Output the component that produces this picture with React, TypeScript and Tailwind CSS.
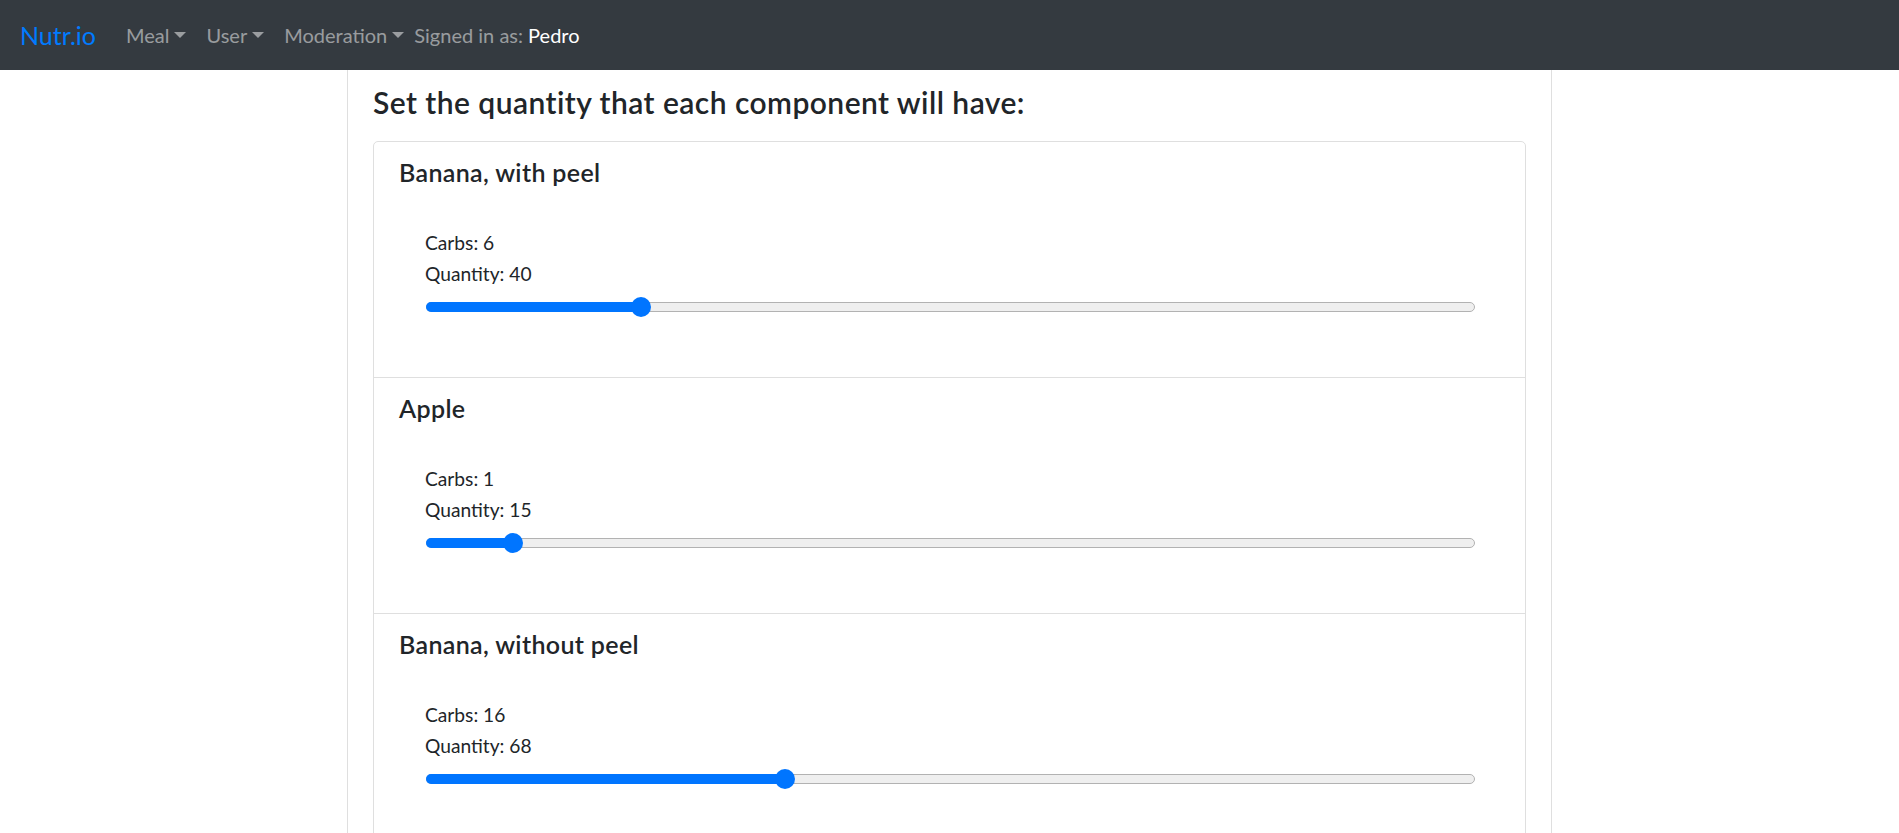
import React from 'react';

type Component = {
  name: string;
  carbs: number;
  quantity: number;
};

const COMPONENTS: Component[] = [
  { name: 'Banana, with peel', carbs: 6, quantity: 40 },
  { name: 'Apple', carbs: 1, quantity: 15 },
  { name: 'Banana, without peel', carbs: 16, quantity: 68 },
];

const MAX_QUANTITY = 200;
const TRACK_WIDTH = 1047;
const THUMB = 20;

const Caret: React.FC = () => (
  <span className="ml-[5px] inline-block h-0 w-0 border-x-[6px] border-t-[6px] border-x-transparent border-t-current align-[3px]" />
);

const NavBar: React.FC = () => {
  const links = ['Meal', 'User', 'Moderation'];

  return (
    <nav className="flex h-[70px] items-center bg-[#343a40] px-[20px] text-[20px]">
      <a href="#" className="mr-[20px] text-[25px] leading-[30px] text-[#007bff]">
        Nutr.io
      </a>
      <ul className="flex items-center">
        {links.map((link) => (
          <li key={link}>
            <a href="#" className="flex items-center px-[10px] text-white/50">
              {link}
              <Caret />
            </a>
          </li>
        ))}
      </ul>
      <span className="text-white/50">
        Signed in as: <span className="text-white">Pedro</span>
      </span>
    </nav>
  );
};

const Slider: React.FC<{ value: number }> = ({ value }) => {
  const center = THUMB / 2 + (value / MAX_QUANTITY) * (TRACK_WIDTH - THUMB);

  return (
    <div className="ml-[1px] flex h-[36px] items-center">
      <div className="relative h-[10px] w-full rounded-full border border-[#b2b2b2] bg-[#efefef]">
        <div
          className="absolute -top-px -bottom-px -left-px rounded-full bg-[#0075ff]"
          style={{ width: center + 1 }}
        />
        <div
          className="absolute top-1/2 h-[20px] w-[20px] -translate-y-1/2 rounded-full bg-[#0075ff]"
          style={{ left: center - THUMB / 2 - 1 }}
        />
      </div>
    </div>
  );
};

const ComponentItem: React.FC<{ item: Component; last: boolean }> = ({ item, last }) => (
  <div className={`px-[25px] pt-[15px] pb-[52px] ${last ? '' : 'border-b border-[#dfdfdf]'}`}>
    <h5 className="text-[25px] font-semibold leading-[30px] tracking-[0.35px]">{item.name}</h5>
    <div className="pt-[40px] pr-[25px] pl-[26px] text-[19.2px] leading-[31px]">
      <p>Carbs: {item.carbs}</p>
      <p>Quantity: {item.quantity}</p>
      <Slider value={item.quantity} />
    </div>
  </div>
);

export default function App() {
  return (
    <div className="h-[833px] overflow-hidden bg-white font-['Lato',sans-serif] text-[#212529]">
      <NavBar />
      <main className="mx-auto h-full w-[1205px] border-x border-[#dfdfdf] px-[25px] pt-[14px]">
        <h4 className="mb-[21px] text-[30px] font-semibold leading-[36px] tracking-[0.45px]">
          Set the quantity that each component will have:
        </h4>
        <div className="rounded-[5px] border border-[#dfdfdf]">
          {COMPONENTS.map((item, i) => (
            <ComponentItem key={item.name} item={item} last={i === COMPONENTS.length - 1} />
          ))}
        </div>
      </main>
    </div>
  );
}
